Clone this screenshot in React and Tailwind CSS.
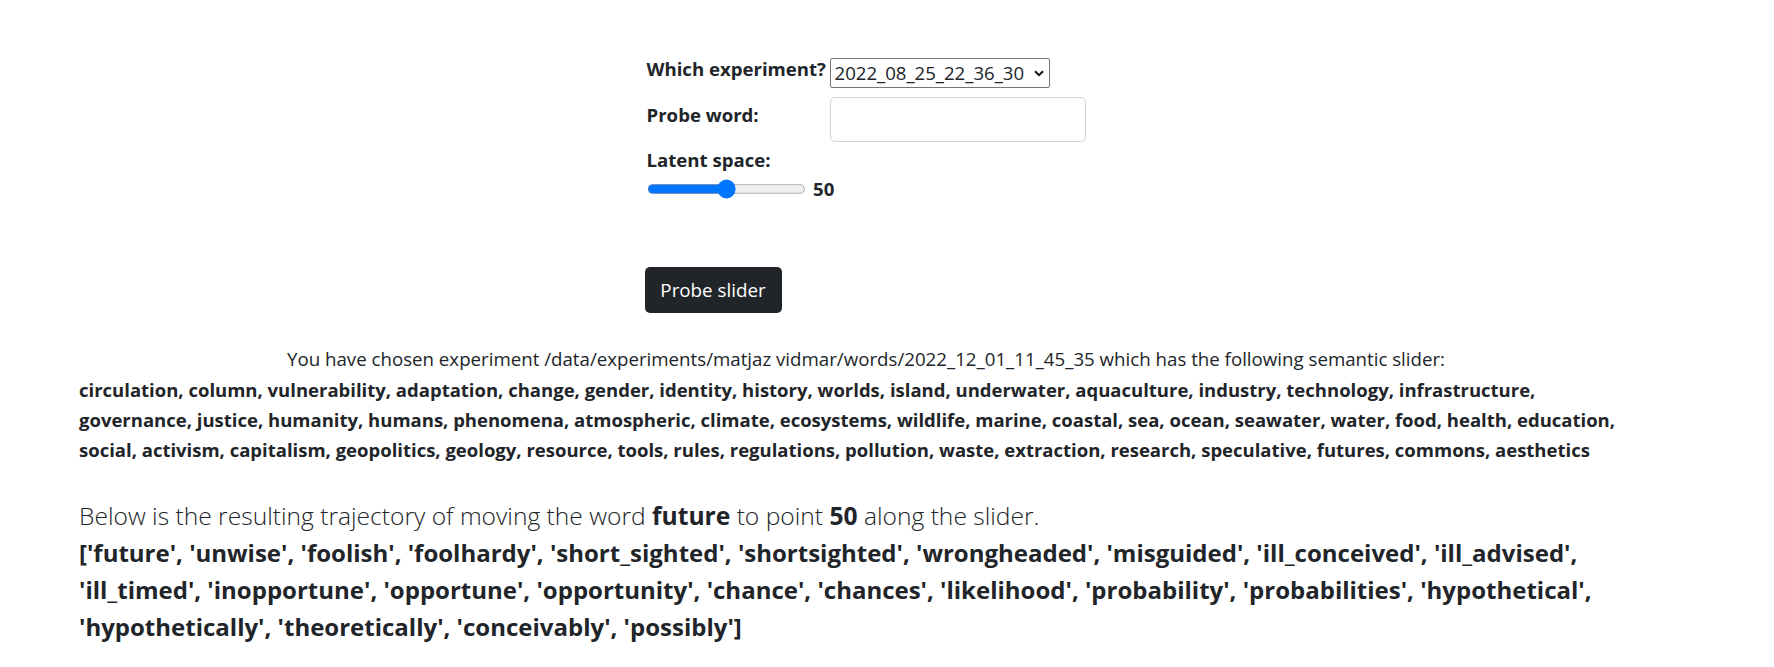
import React, { useState } from "react";

const sliderWords =
  "circulation, column, vulnerability, adaptation, change, gender, identity, history, worlds, island, underwater, aquaculture, industry, technology, infrastructure,|governance, justice, humanity, humans, phenomena, atmospheric, climate, ecosystems, wildlife, marine, coastal, sea, ocean, seawater, water, food, health, education,|social, activism, capitalism, geopolitics, geology, resource, tools, rules, regulations, pollution, waste, extraction, research, speculative, futures, commons, aesthetics";

const trajectory = [
  "['future', 'unwise', 'foolish', 'foolhardy', 'short_sighted', 'shortsighted', 'wrongheaded', 'misguided', 'ill_conceived', 'ill_advised',",
  "'ill_timed', 'inopportune', 'opportune', 'opportunity', 'chance', 'chances', 'likelihood', 'probability', 'probabilities', 'hypothetical',",
  "'hypothetically', 'theoretically', 'conceivably', 'possibly']",
];

const App = () => {
  const [experiment, setExperiment] = useState("2022_08_25_22_36_30");
  const [word, setWord] = useState("");
  const [point, setPoint] = useState(50);

  return (
    <div className="min-h-screen bg-white text-[#212529] font-['Open_Sans',sans-serif]">
      <div className="ml-[79px] w-[1574px] pt-[57px]">
        <form className="mx-auto w-[439px]" onSubmit={(e) => e.preventDefault()}>
          <div className="grid grid-cols-[183px_256px] items-start">
            <label htmlFor="experiment" className="text-[18.6px] font-bold leading-[24px]">
              Which experiment?
            </label>
            <div className="relative mt-px w-[220px]">
              <select
                id="experiment"
                value={experiment}
                onChange={(e) => setExperiment(e.target.value)}
                className="h-[30px] w-[220px] appearance-none rounded-[2px] border border-[#767676] bg-white pl-[4px] text-[18.6px] leading-[28px]"
              >
                <option>2022_08_25_22_36_30</option>
                <option>2022_12_01_11_45_35</option>
              </select>
              <svg
                className="pointer-events-none absolute right-[6px] top-[12px]"
                width="10"
                height="7"
                viewBox="0 0 10 7"
                fill="none"
              >
                <path d="M1 1.2 5 5.2 9 1.2" stroke="#111" strokeWidth="2" />
              </svg>
            </div>

            <label htmlFor="word" className="mt-[15px] text-[18.6px] font-bold leading-[24px]">
              Probe word:
            </label>
            <input
              id="word"
              type="text"
              value={word}
              onChange={(e) => setWord(e.target.value)}
              className="mt-[9px] h-[45px] w-[256px] rounded-[5px] border border-[#ced4da] px-3 text-[18.6px] outline-none"
            />
          </div>

          <div className="mt-[6px]">
            <label htmlFor="latent" className="block text-[18.6px] font-bold leading-[24px]">
              Latent space:
            </label>
            <div className="mt-[5px] flex h-[24px] items-center">
              <input
                id="latent"
                type="range"
                min="0"
                max="100"
                value={point}
                onChange={(e) => setPoint(e.target.value)}
                className="m-0 w-[133px] [zoom:1.2]"
              />
              <output className="ml-[7px] text-[18.6px] font-bold leading-[24px]">{point}</output>
            </div>
          </div>

          <button
            type="submit"
            className="-ml-[2px] mt-[66px] block h-[46px] w-[137px] rounded-[5px] bg-[#212529] text-[18.8px] text-white"
          >
            Probe slider
          </button>
        </form>

        <p className="mt-[31px] text-center text-[18.7px] leading-[30px]">
          You have chosen experiment /data/experiments/matjaz vidmar/words/2022_12_01_11_45_35 which has the following
          semantic slider:
        </p>
        <p className="mt-px text-[18.5px] font-bold leading-[30px]">
          {sliderWords.split("|").map((line) => (
            <span key={line} className="block whitespace-nowrap">
              {line}
            </span>
          ))}
        </p>

        <div className="mt-[32px] leading-[37px]">
          <p className="text-[24.6px] font-light">
            Below is the resulting trajectory of moving the word <b className="font-bold">future</b> to point{" "}
            <b className="font-bold">50</b> along the slider.
          </p>
          <p className="text-[24px] font-bold">
            {trajectory.map((line) => (
              <span key={line} className="block whitespace-nowrap">
                {line}
              </span>
            ))}
          </p>
        </div>
      </div>
    </div>
  );
};

export default App;
